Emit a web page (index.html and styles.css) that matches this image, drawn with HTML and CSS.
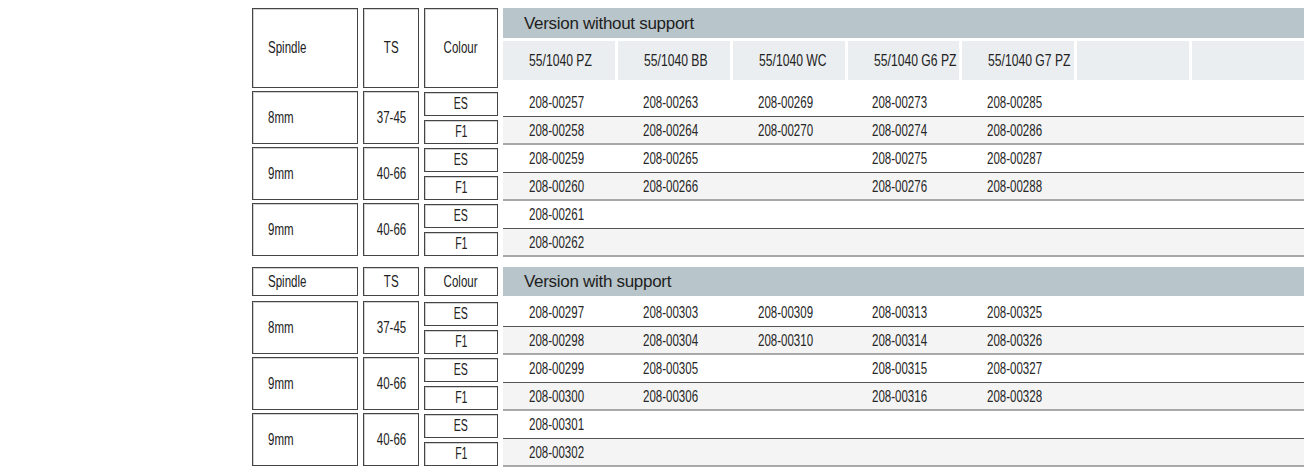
FILE: index.html
```html
<!DOCTYPE html>
<html lang="en">
<head>
<meta charset="utf-8">
<title>Versions</title>
<link rel="stylesheet" href="styles.css">
</head>
<body>
<div class="page">
  <section class="block">
    <div class="head head-tall">
      <div class="box lbl-left"><span class="t">Spindle</span></div>
      <div class="box lbl-center"><span class="t">TS</span></div>
      <div class="box lbl-center"><span class="t">Colour</span></div>
      <div class="vhead">
        <div class="vtitle">Version without support</div>
        <div class="models">
          <div class="model"><span class="t">55/1040 PZ</span></div>
          <div class="model"><span class="t">55/1040 BB</span></div>
          <div class="model"><span class="t">55/1040 WC</span></div>
          <div class="model"><span class="t">55/1040 G6 PZ</span></div>
          <div class="model"><span class="t">55/1040 G7 PZ</span></div>
          <div class="model"></div>
          <div class="model"></div>
        </div>
      </div>
    </div>

    <div class="group">
      <div class="box gbox lbl-left"><span class="t">8mm</span></div>
      <div class="box gbox lbl-center"><span class="t">37-45</span></div>
      <div class="colours"><div class="box cbox es"><span class="t">ES</span></div><div class="box cbox f1"><span class="t">F1</span></div></div>
      <div class="rows">
        <div class="row row-es"><span>208-00257</span><span>208-00263</span><span>208-00269</span><span>208-00273</span><span>208-00285</span><span></span><span></span></div>
        <div class="row row-f1"><span>208-00258</span><span>208-00264</span><span>208-00270</span><span>208-00274</span><span>208-00286</span><span></span><span></span></div>
      </div>
    </div>
    <div class="group">
      <div class="box gbox lbl-left"><span class="t">9mm</span></div>
      <div class="box gbox lbl-center"><span class="t">40-66</span></div>
      <div class="colours"><div class="box cbox es"><span class="t">ES</span></div><div class="box cbox f1"><span class="t">F1</span></div></div>
      <div class="rows">
        <div class="row row-es"><span>208-00259</span><span>208-00265</span><span></span><span>208-00275</span><span>208-00287</span><span></span><span></span></div>
        <div class="row row-f1"><span>208-00260</span><span>208-00266</span><span></span><span>208-00276</span><span>208-00288</span><span></span><span></span></div>
      </div>
    </div>
    <div class="group">
      <div class="box gbox lbl-left"><span class="t">9mm</span></div>
      <div class="box gbox lbl-center"><span class="t">40-66</span></div>
      <div class="colours"><div class="box cbox es"><span class="t">ES</span></div><div class="box cbox f1"><span class="t">F1</span></div></div>
      <div class="rows">
        <div class="row row-es"><span>208-00261</span><span></span><span></span><span></span><span></span><span></span><span></span></div>
        <div class="row row-f1"><span>208-00262</span><span></span><span></span><span></span><span></span><span></span><span></span></div>
      </div>
    </div>
  </section>

  <section class="block block-2">
    <div class="head head-short">
      <div class="box lbl-left"><span class="t">Spindle</span></div>
      <div class="box lbl-center"><span class="t">TS</span></div>
      <div class="box lbl-center"><span class="t">Colour</span></div>
      <div class="vhead">
        <div class="vtitle vtitle-full">Version with support</div>
      </div>
    </div>

    <div class="group">
      <div class="box gbox lbl-left"><span class="t">8mm</span></div>
      <div class="box gbox lbl-center"><span class="t">37-45</span></div>
      <div class="colours"><div class="box cbox es"><span class="t">ES</span></div><div class="box cbox f1"><span class="t">F1</span></div></div>
      <div class="rows">
        <div class="row row-es"><span>208-00297</span><span>208-00303</span><span>208-00309</span><span>208-00313</span><span>208-00325</span><span></span><span></span></div>
        <div class="row row-f1"><span>208-00298</span><span>208-00304</span><span>208-00310</span><span>208-00314</span><span>208-00326</span><span></span><span></span></div>
      </div>
    </div>
    <div class="group">
      <div class="box gbox lbl-left"><span class="t">9mm</span></div>
      <div class="box gbox lbl-center"><span class="t">40-66</span></div>
      <div class="colours"><div class="box cbox es"><span class="t">ES</span></div><div class="box cbox f1"><span class="t">F1</span></div></div>
      <div class="rows">
        <div class="row row-es"><span>208-00299</span><span>208-00305</span><span></span><span>208-00315</span><span>208-00327</span><span></span><span></span></div>
        <div class="row row-f1"><span>208-00300</span><span>208-00306</span><span></span><span>208-00316</span><span>208-00328</span><span></span><span></span></div>
      </div>
    </div>
    <div class="group">
      <div class="box gbox lbl-left"><span class="t">9mm</span></div>
      <div class="box gbox lbl-center"><span class="t">40-66</span></div>
      <div class="colours"><div class="box cbox es"><span class="t">ES</span></div><div class="box cbox f1"><span class="t">F1</span></div></div>
      <div class="rows">
        <div class="row row-es"><span>208-00301</span><span></span><span></span><span></span><span></span><span></span><span></span></div>
        <div class="row row-f1"><span>208-00302</span><span></span><span></span><span></span><span></span><span></span><span></span></div>
      </div>
    </div>
  </section>
</div>
</body>
</html>
```

FILE: styles.css
```css
* { box-sizing: border-box; }

html, body {
  margin: 0;
  padding: 0;
  background: #ffffff;
}

body {
  font-family: "Liberation Sans", Arial, sans-serif;
  color: #222222;
  font-size: 16px;
  white-space: nowrap;
}

.page {
  padding: 8px 0 0 252px;
  width: 1304px;
  display: flex;
  flex-direction: column;
}

.block-2 {
  margin-top: 10px;
}

.head,
.group {
  display: grid;
  grid-template-columns: 106px 56px 74px 801px;
  column-gap: 5px;
}

.head-tall {
  height: 80px;
  margin-bottom: 1px;
}

.head-short {
  height: 29px;
  margin-bottom: 3px;
}

/* condensed rendering of the label text */
.t {
  display: inline-block;
  transform: scaleX(0.72);
}

.box {
  border: 1px solid #454545;
  box-shadow: inset 1px 1px 0 #d0d0d0;
  display: flex;
  align-items: center;
  background: #ffffff;
}

.lbl-left {
  padding-left: 15px;
}

.lbl-left .t {
  transform-origin: 0 50%;
}

.lbl-center {
  justify-content: center;
}

.lbl-center .t {
  transform-origin: 50% 50%;
}

.vhead {
  display: flex;
  flex-direction: column;
}

.vtitle {
  height: 30px;
  background: #b8c5ca;
  font-size: 17px;
  padding: 1px 0 0 21px;
  display: flex;
  align-items: center;
  color: #1e1e1e;
  letter-spacing: -0.3px;
}

.vtitle-full {
  height: 29px;
}

.models {
  margin-top: 3px;
  height: 39px;
  display: grid;
  grid-template-columns: repeat(7, minmax(0, 1fr));
  column-gap: 3px;
}

.model {
  background: #ebeef0;
  padding-left: 26px;
  display: flex;
  align-items: center;
  min-width: 0;
}

.model .t {
  transform: scaleX(0.76);
  transform-origin: 0 50%;
}

.group {
  height: 56px;
}

.gbox {
  margin-top: 2px;
  height: 53px;
}

.colours {
  display: flex;
  flex-direction: column;
}

.cbox {
  height: 24px;
  justify-content: center;
}

.cbox .t {
  transform: scaleX(0.66);
}

.cbox.es {
  margin-top: 3px;
}

.cbox.f1 {
  margin-top: 4px;
}

.rows {
  display: flex;
  flex-direction: column;
}

.row {
  height: 28px;
  display: grid;
  grid-template-columns: repeat(7, minmax(0, 1fr));
  align-items: center;
  color: #262626;
}

.row span {
  padding-left: 26px;
  display: block;
  min-width: 0;
  transform: scaleX(0.72);
  transform-origin: 26px 50%;
}

.row-es {
  background: #ffffff;
  border-bottom: 1px solid #555555;
  padding-top: 1px;
}

.row-f1 {
  background: #f4f4f4;
  border-bottom: 2px solid #a8a8a8;
  padding-top: 2px;
}
```
